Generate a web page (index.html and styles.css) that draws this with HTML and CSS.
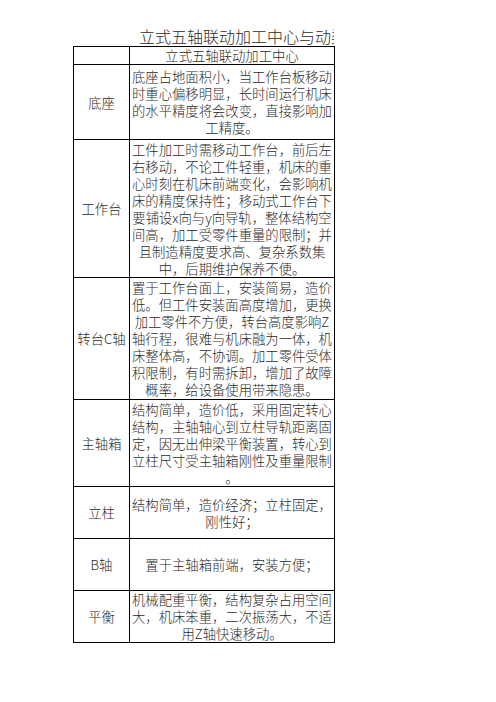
FILE: index.html
```html
<!DOCTYPE html>
<html lang="zh-CN">
<head>
<meta charset="utf-8">
<title>立式五轴联动加工中心</title>
<link rel="stylesheet" href="styles.css">
</head>
<body>
<div class="sheet">
  <div class="title">立式五轴联动加工中心与动梁式五轴联动加工中心对比</div>
  <table class="grid">
    <colgroup><col class="c-label"><col class="c-text"></colgroup>
    <tr class="r-head"><td></td><td>立式五轴联动加工中心</td></tr>
    <tr class="r-base"><td>底座</td><td>底座占地面积小，当工作台板移动<br>时重心偏移明显，长时间运行机床<br>的水平精度将会改变，直接影响加<br>工精度。</td></tr>
    <tr class="r-table"><td>工作台</td><td>工件加工时需移动工作台，前后左<br>右移动，不论工件轻重，机床的重<br>心时刻在机床前端变化，会影响机<br>床的精度保持性；移动式工作台下<br>要铺设x向与y向导轨，整体结构空<br>间高，加工受零件重量的限制；并<br>且制造精度要求高、复杂系数集<br>中，后期维护保养不便。</td></tr>
    <tr class="r-rot"><td>转台C轴</td><td>置于工作台面上，安装简易，造价<br>低。但工件安装面高度增加，更换<br>加工零件不方便，转台高度影响Z<br>轴行程，很难与机床融为一体，机<br>床整体高，不协调。加工零件受体<br>积限制，有时需拆卸，增加了故障<br>概率，给设备使用带来隐患。</td></tr>
    <tr class="r-spin"><td>主轴箱</td><td>结构简单，造价低，采用固定转心<br>结构，主轴轴心到立柱导轨距离固<br>定，因无出伸梁平衡装置，转心到<br>立柱尺寸受主轴箱刚性及重量限制<br>。</td></tr>
    <tr class="r-short"><td>立柱</td><td>结构简单，造价经济；立柱固定，<br>刚性好；</td></tr>
    <tr class="r-short"><td>B轴</td><td>置于主轴箱前端，安装方便；</td></tr>
    <tr class="r-short"><td>平衡</td><td>机械配重平衡，结构复杂占用空间<br>大，机床笨重，二次振荡大，不适<br>用Z轴快速移动。</td></tr>
  </table>
</div>
</body>
</html>
```
FILE: styles.css
```css
html, body {
  margin: 0;
  padding: 0;
  background: #fff;
}
body {
  font-family: "Noto Sans CJK SC", "Noto Sans", sans-serif;
  font-weight: 300;
  color: #2a2a2a;
}
.sheet {
  margin-left: 73px;
  padding-top: 27px;
  width: 261px;
}
.title {
  height: 19px;
  line-height: 18px;
  font-size: 16px;
  padding-left: 66px;
  white-space: nowrap;
  overflow: hidden;
}
.grid {
  border-collapse: collapse;
  table-layout: fixed;
  width: 261px;
  font-size: 13.33px;
  line-height: 17px;
}
.c-label { width: 56px; }
.c-text { width: 205px; }
.grid td {
  border: 1px solid #000;
  padding: 0;
  text-align: center;
  vertical-align: middle;
  white-space: nowrap;
  overflow: hidden;
}
.r-head td { height: 16px; }
.r-base td { height: 74px; }
.r-table td { height: 137px; }
.r-rot td { height: 121px; }
.r-spin td { height: 86px; }
.r-short td { height: 51px; }
```
